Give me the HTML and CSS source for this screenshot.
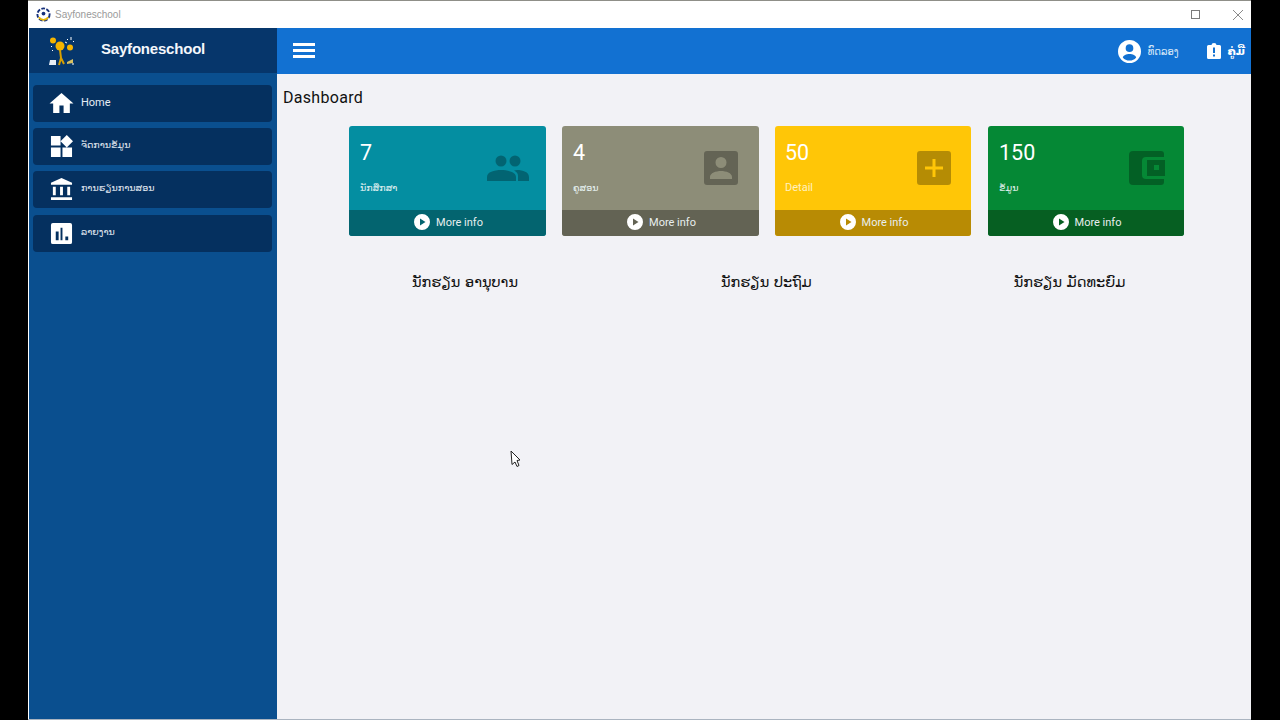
FILE: index.html
```html
<!DOCTYPE html>
<html lang="lo">
<head>
<meta charset="utf-8">
<title>Sayfoneschool</title>
<link rel="stylesheet" href="styles.css">
</head>
<body>
<div class="window">
  <div class="titlebar">
    <div class="title-left">
      <svg class="app-icon" viewBox="0 0 16 16"><circle cx="8" cy="8" r="6.5" fill="#fff" stroke="#16307a" stroke-width="2" stroke-dasharray="4 1.5"/><path d="M3 11a6 6 0 0 0 10 0" fill="none" stroke="#e6b400" stroke-width="2"/><circle cx="8" cy="7" r="2" fill="#16307a"/></svg>
      <span class="title-text">Sayfoneschool</span>
    </div>
    <div class="win-controls">
      <span class="win-max"></span>
      <svg class="win-close" viewBox="0 0 10 10"><path d="M0 0L10 10M10 0L0 10" stroke="#8a8a8a" stroke-width="1" fill="none"/></svg>
    </div>
  </div>
  <div class="app">
    <aside class="sidebar">
      <div class="brand">
        <svg class="logo" viewBox="0 0 28 30">
          <circle cx="5" cy="4.500" r="3" fill="#f5b400"/><circle cx="12" cy="10" r="4.500" fill="#f5b400"/><circle cx="22" cy="11.500" r="3" fill="#f5b400"/>
          <path d="M12 14l1 8-2 7M13 22l3 6" stroke="#d8a000" stroke-width="2" fill="none"/>
          <path d="M2 24h6v5H1z" fill="#e8eef5"/><path d="M19 26l6-3v4l-6 1z" fill="#d8c060"/>
          <path d="M19 3l1 1M23 1v3M25 5l1 1M3 10l1 1M4 14l1 1M17 6l2 1M24 28h2" stroke="#fff" stroke-width="1"/>
        </svg>
        <span class="brand-name">Sayfoneschool</span>
      </div>
      <nav class="menu">
        <a class="menu-item">
          <svg class="menu-icon home" viewBox="0 0 24 24"><path d="M10 21v-7h4v7h6v-9h3.500L12 2 .5 12H4v9z" fill="#fff"/></svg>
          <span>Home</span>
        </a>
        <a class="menu-item">
          <svg class="menu-icon" viewBox="0 0 24 24"><path d="M1 1h10v10H1zM1 13h10v10H1zM13 13h10v10H13zM17.500 0L24 6.500 17.500 13 11 6.500z" fill="#fff"/></svg>
          <span class="lao">ຈັດການຂໍ້ມູນ</span>
        </a>
        <a class="menu-item">
          <svg class="menu-icon" viewBox="0 0 24 24"><path d="M12 0L1 5v2h22V5zM3 9h3v9H3zM10.500 9h3v9h-3zM18 9h3v9h-3zM1 20h22v3H1z" fill="#fff"/></svg>
          <span class="lao">ການຮຽນການສອນ</span>
        </a>
        <a class="menu-item">
          <svg class="menu-icon" viewBox="0 0 24 24"><path d="M3 1h18a2 2 0 0 1 2 2v18a2 2 0 0 1-2 2H3a2 2 0 0 1-2-2V3a2 2 0 0 1 2-2zm3 9v9h3v-9zm5-4v13h2V6zm5 9v4h3v-4z" fill="#fff" fill-rule="evenodd"/></svg>
          <span class="lao">ລາຍງານ</span>
        </a>
      </nav>
    </aside>
    <div class="main">
      <header class="topbar">
        <button class="burger"><i></i><i></i><i></i></button>
        <div class="top-actions">
          <div class="top-user">
            <svg class="user-icon" viewBox="0 0 24 24"><path d="M12 0a12 12 0 1 0 0 24 12 12 0 0 0 0-24zm0 4.500a4 4 0 1 1 0 8 4 4 0 0 1 0-8zm0 17a9 9 0 0 1-7-3.300c.5-2.200 3.500-3.700 7-3.700s6.500 1.500 7 3.700a9 9 0 0 1-7 3.300z" fill="#fff"/></svg>
            <span class="lao user-name">ທົດລອງ</span>
          </div>
          <div class="top-help">
            <svg class="help-icon" viewBox="0 0 14 16"><path d="M1.500 2H4.500a2.500 2 0 0 1 5 0h3A1.500 1.500 0 0 1 14 3.500v11a1.500 1.500 0 0 1-1.500 1.500h-11A1.500 1.500 0 0 1 0 14.500v-11A1.500 1.500 0 0 1 1.500 2zM6 4.500V10h2V4.500zM6 11.500v2h2v-2z" fill="#fff" fill-rule="evenodd"/></svg>
            <span class="lao help-text">ຄູ່ມື</span>
          </div>
        </div>
      </header>
      <main class="content">
        <h1 class="page-title">Dashboard</h1>
        <section class="cards">
          <article class="card teal">
            <div class="card-body">
              <div class="card-text"><div class="card-num">7</div><div class="card-label lao">ນັກສຶກສາ</div></div>
              <svg class="card-icon people" viewBox="0 0 42 26"><circle cx="14" cy="6" r="5.500"/><circle cx="28" cy="6" r="5.500"/><path d="M0 26v-4c0-5 7-7 14-7s15 2 15 7v4zM30 15c6 0 12 2 12 7v4H31v-5c0-2-1-4-4-5.500z"/></svg>
            </div>
            <a class="card-foot"><svg class="play" viewBox="0 0 16 16"><path d="M8 0a8 8 0 1 0 0 16A8 8 0 0 0 8 0zM6 4.500L11.500 8 6 11.500z" fill="#fff" fill-rule="evenodd"/></svg>More info</a>
          </article>
          <article class="card grey">
            <div class="card-body">
              <div class="card-text"><div class="card-num">4</div><div class="card-label lao">ຄູສອນ</div></div>
              <svg class="card-icon square" viewBox="0 0 34 34"><path d="M3 0h28a3 3 0 0 1 3 3v28a3 3 0 0 1-3 3H3a3 3 0 0 1-3-3V3a3 3 0 0 1 3-3zm14 6a5.500 5.500 0 1 0 0 11 5.500 5.500 0 0 0 0-11zM6 28h22v-2c0-4-6-6-11-6S6 22 6 26z" fill-rule="evenodd"/></svg>
            </div>
            <a class="card-foot"><svg class="play" viewBox="0 0 16 16"><path d="M8 0a8 8 0 1 0 0 16A8 8 0 0 0 8 0zM6 4.500L11.500 8 6 11.500z" fill="#fff" fill-rule="evenodd"/></svg>More info</a>
          </article>
          <article class="card yellow">
            <div class="card-body">
              <div class="card-text"><div class="card-num">50</div><div class="card-label">Detail</div></div>
              <svg class="card-icon square" viewBox="0 0 34 34"><path d="M3 0h28a3 3 0 0 1 3 3v28a3 3 0 0 1-3 3H3a3 3 0 0 1-3-3V3a3 3 0 0 1 3-3zm12.500 8v7.500H8v3h7.500V26h3v-7.500H26v-3h-7.500V8z" fill-rule="evenodd"/></svg>
            </div>
            <a class="card-foot"><svg class="play" viewBox="0 0 16 16"><path d="M8 0a8 8 0 1 0 0 16A8 8 0 0 0 8 0zM6 4.500L11.500 8 6 11.500z" fill="#fff" fill-rule="evenodd"/></svg>More info</a>
          </article>
          <article class="card green">
            <div class="card-body">
              <div class="card-text"><div class="card-num">150</div><div class="card-label lao">ຂໍ້ມູນ</div></div>
              <svg class="card-icon square" viewBox="0 0 36 34"><path d="M4 0h28a3 3 0 0 1 3 3v3H17a4 4 0 0 0-4 4v14a4 4 0 0 0 4 4h18v3a3 3 0 0 1-3 3H4a4 4 0 0 1-4-4V4a4 4 0 0 1 4-4zM18 9h18v16H18zm7 5v5h5v-5z" fill-rule="evenodd"/></svg>
            </div>
            <a class="card-foot"><svg class="play" viewBox="0 0 16 16"><path d="M8 0a8 8 0 1 0 0 16A8 8 0 0 0 8 0zM6 4.500L11.500 8 6 11.500z" fill="#fff" fill-rule="evenodd"/></svg>More info</a>
          </article>
        </section>
        <section class="levels">
          <div class="level lao">ນັກຮຽນ ອານຸບານ</div>
          <div class="level lao">ນັກຮຽນ ປະຖົມ</div>
          <div class="level lao">ນັກຮຽນ ມັດທະຍົມ</div>
        </section>
      </main>
    </div>
  </div>
</div>
<svg class="cursor" viewBox="0 0 12 18"><path d="M1 1l9 9-3 .5 2 5-2 1-2-4.500-3 2.500z" fill="#fff" stroke="#222" stroke-width="1"/></svg>
</body>
</html>
```
FILE: styles.css
```css
* { box-sizing: border-box; }
html, body { margin: 0; height: 100%; }
body {
  background: #000;
  overflow: hidden;
  position: relative;
  font-family: Roboto, "DejaVu Sans", sans-serif;
}
.lao { font-family: "DejaVu Sans", Roboto, sans-serif; }
.window {
  width: 1223px;
  height: 720px;
  margin-left: 28px;
  display: flex;
  flex-direction: column;
  background: #fff;
  padding-left: 1px;
  border-top: 1px solid #8f8f88;
  border-bottom: 1px solid #aab4c0;
}
.titlebar {
  height: 27px;
  flex: none;
  background: #fff;
  display: flex;
  justify-content: space-between;
  align-items: center;
}
.title-left { display: flex; align-items: center; gap: 4px; padding-left: 7px; }
.app-icon { width: 15px; height: 15px; }
.title-text { font: 10px "Liberation Sans", sans-serif; color: #9a9a9a; }
.win-controls { display: flex; align-items: center; gap: 33px; padding-right: 8px; }
.win-max { width: 9px; height: 9px; border: 1px solid #7c7c7c; display: block; }
.win-close { width: 10px; height: 10px; display: block; }
.app { flex: 1; display: flex; min-height: 0; }
.sidebar { width: 248px; flex: none; background: #0a4f8f; display: flex; flex-direction: column; }
.brand {
  height: 45px;
  flex: none;
  background: #06366b;
  display: flex;
  align-items: center;
  padding-left: 19px;
  gap: 25px;
}
.logo { width: 28px; height: 30px; flex: none; }
.brand-name { font: bold 15px "Liberation Sans", sans-serif; color: #f4f7fb; padding-bottom: 4px; letter-spacing: -.2px; }
.menu { display: flex; flex-direction: column; gap: 6.200px; padding: 12px 5px 0 4px; }
.menu-item {
  height: 37px;
  background: #05305f;
  border-radius: 4px;
  display: flex;
  align-items: center;
  color: #e6ecf4;
  font-size: 11px;
  padding: 0 0 2px 17px;
  gap: 8px;
}
.menu-item svg { margin-top: 2px; }
.menu-icon { width: 23px; height: 23px; flex: none; }
.menu-icon.home { width: 25px; height: 25px; margin-left: -1px; margin-right: -1px; }
.menu-item .lao { font-size: 9.500px; margin-bottom: 2px; }
.main { flex: 1; display: flex; flex-direction: column; min-width: 0; }
.topbar {
  height: 46px;
  flex: none;
  background: #1271d2;
  display: flex;
  justify-content: space-between;
  align-items: center;
  padding: 0 6px 0 16px;
}
.burger {
  width: 22px;
  height: 15px;
  padding: 0;
  margin-top: -1px;
  border: 0;
  background: none;
  display: flex;
  flex-direction: column;
  justify-content: space-between;
}
.burger i { display: block; height: 3px; background: #fff; }
.top-actions { display: flex; align-items: center; gap: 28px; }
.top-user, .top-help { display: flex; align-items: center; gap: 7px; color: #fff; }
.user-icon { width: 23px; height: 23px; }
.user-name { font-size: 10px; color: #d8e8f8; }
.help-icon { width: 14px; height: 16px; }
.help-text { font-size: 11px; font-weight: bold; }
.content { flex: 1; background: #f2f2f6; padding: 13px 6px 0; }
.page-title { margin: 0; font-size: 16px; font-weight: 400; line-height: 21px; color: #111; letter-spacing: .3px; }
.cards { display: flex; gap: 16px; margin: 18px 0 0 66px; }
.card { width: 197px; height: 110px; border-radius: 3px; overflow: hidden; display: flex; flex-direction: column; color: #fff; }
.teal { background: #048ea1; --foot: #03646f; }
.grey { background: #8d8d78; --foot: #636354; }
.yellow { background: #ffc607; --foot: #b88b04; width: 196px; }
.green { background: #058835; --foot: #065f22; width: 196px; margin-left: 1px; }
.card-body { flex: 1; display: flex; justify-content: space-between; align-items: center; padding: 0 20px 0 11px; }
.yellow .card-body { padding-left: 10px; }
.card-text { align-self: flex-start; padding-top: 13px; }
.card-num { font-size: 21.500px; line-height: 27px; }
.card-label { font-size: 9.500px; line-height: 14px; margin-top: 15px; color: #e8f4f4; }
.yellow .card-label { color: #fff1c0; font-size: 11px; }
.card-icon { fill: rgba(0,0,0,.29); }
.card-icon.people { width: 42px; height: 26px; margin-right: -3px; }
.card-icon.square { width: 34px; height: 34px; margin-right: 1px; }
.yellow .card-icon.square { margin-right: 0; }
.green .card-icon.square { width: 36px; margin-right: -1px; }
.card-foot {
  height: 26px;
  flex: none;
  background: var(--foot);
  display: flex;
  align-items: center;
  justify-content: center;
  gap: 6px;
  font-size: 11px;
  color: #e8eeee;
  padding: 0 0 2px 2px;
}
.play { width: 16px; height: 16px; }
.levels { display: flex; margin-top: 34px; color: #111; font-size: 14.500px; }
.level { line-height: 24px; white-space: nowrap; }
.level:nth-child(1) { margin-left: 129px; }
.level:nth-child(2) { margin-left: 203px; }
.level:nth-child(3) { margin-left: 202px; }
.cursor { position: absolute; left: 510px; top: 450px; width: 12px; height: 18px; }
```
